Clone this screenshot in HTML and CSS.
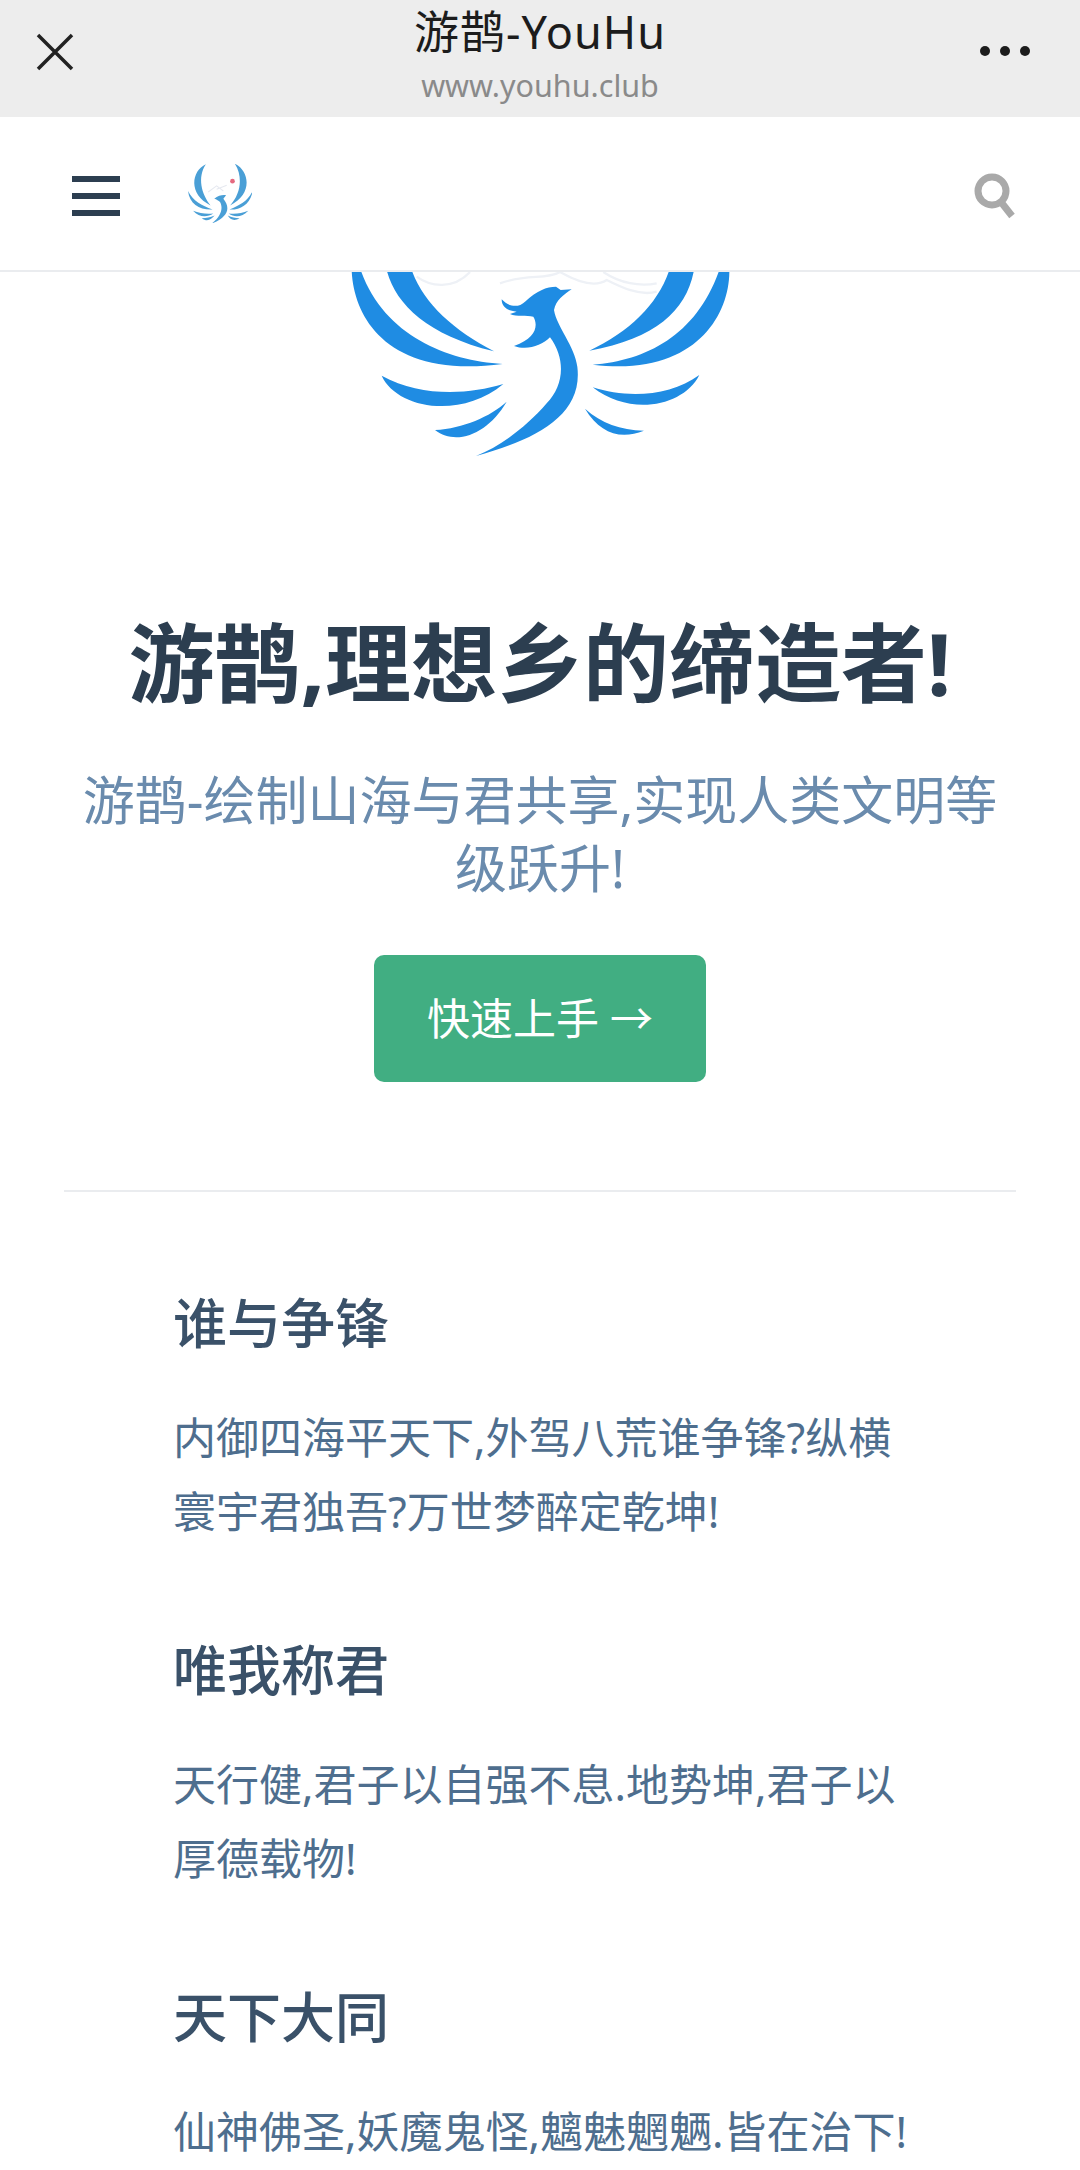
FILE: index.html
```html
<!DOCTYPE html>
<html lang="zh">
<head>
<meta charset="utf-8">
<title>游鹊-YouHu</title>
<link rel="stylesheet" href="styles.css">
</head>
<body>
<div class="page">
  <div class="wx-bar">
    <svg class="wx-close" viewBox="0 0 38 38"><path d="M2 2 L36 36 M36 2 L2 36"/></svg>
    <div class="wx-titles">
      <div class="wx-title">游鹊-YouHu</div>
      <div class="wx-url">www.youhu.club</div>
    </div>
    <div class="wx-more"><i></i><i></i><i></i></div>
  </div>
  <header class="nav">
    <div class="burger"><i></i><i></i><i></i></div>
    <svg class="nav-logo" viewBox="85 75 190 175">
      <g fill="#4a9fd6">
        <path d="M138 76 C95 95 85 165 152 198 C125 165 112 115 138 76Z"/>
        <path d="M224 74 C268 95 278 165 210 198 C240 165 250 115 224 74Z"/>
        <path d="M85 155 C90 195 120 212 158 210 C125 197 100 185 85 155Z"/>
        <path d="M277 155 C270 195 240 212 208 210 C240 197 262 185 277 155Z"/>
        <path d="M100 214 C118 234 142 234 160 222 C140 224 120 222 100 214Z"/>
        <path d="M264 214 C245 234 222 234 206 222 C225 224 245 222 264 214Z"/>
        <path d="M126 236 C142 248 154 240 164 228 C150 234 140 236 126 236Z"/>
        <path d="M238 236 C222 246 210 240 203 228 C215 234 225 236 238 236Z"/>
        <path d="M163 178 C175 168 190 166 198 168 L190 178 C212 205 205 232 155 252 C184 230 190 205 180 188 C176 184 170 180 163 178Z"/>
      </g>
      <circle cx="217" cy="126" r="7" fill="#e56a80"/>
      <path d="M145 158 L170 140 L190 155 M170 150 L200 138" fill="none" stroke="#e6e9f0" stroke-width="3"/>
    </svg>
    <svg class="nav-search" viewBox="0 0 42 46"><circle cx="18" cy="18" r="14" /><path d="M27 29 L38 43"/></svg>
  </header>
  <main class="home">
    <section class="hero">
      <svg class="hero-logo" viewBox="0 36 1320 594">
        <g class="mist">
          <path d="M290 50 C330 80 400 90 450 36"/>
          <path d="M540 70 C620 40 680 60 720 36 C780 70 830 80 860 60 C900 80 960 110 1010 95"/>
          <path d="M850 36 C900 70 960 80 1010 70"/>
        </g>
        <g class="wings">
          <path d="M95 30 C100 170 200 358 548 312 C380 302 190 225 122 30Z"/>
          <path d="M200 30 C225 130 320 225 522 274 C400 210 310 130 275 30Z"/>
          <path d="M1228 30 C1230 170 1120 352 818 314 C980 302 1130 225 1198 30Z"/>
          <path d="M1122 30 C1100 150 1010 235 808 272 C930 215 1015 130 1048 30Z"/>
          <path d="M185 347 C230 445 420 480 550 372 C440 405 300 410 185 347Z"/>
          <path d="M1138 345 C1090 440 930 470 818 382 C920 415 1050 410 1138 345Z"/>
          <path d="M345 510 C410 560 505 520 560 425 C510 470 430 505 345 510Z"/>
          <path d="M972 512 C900 540 840 520 795 446 C845 490 900 510 972 512Z"/>
          <path d="M468 588 C640 540 790 470 772 320 C765 260 710 200 702 150 C708 120 730 105 755 88 L722 90 L708 80 C680 80 650 92 615 125 C595 145 565 140 545 118 C545 140 560 152 590 155 L570 162 C590 172 620 165 640 170 C655 195 650 235 582 258 C620 272 665 258 690 232 C740 300 730 380 680 430 C620 500 540 560 468 588Z"/>
        </g>
      </svg>
      <h1 class="hero-title">游鹊,理想乡的缔造者!</h1>
      <p class="hero-desc">游鹊-绘制山海与君共享,实现人类文明等级跃升!</p>
      <a class="cta" href="#">快速上手 →</a>
    </section>
    <section class="features">
      <article class="feature">
        <h2>谁与争锋</h2>
        <p>内御四海平天下,外驾八荒谁争锋?纵横寰宇君独吾?万世梦醉定乾坤!</p>
      </article>
      <article class="feature">
        <h2>唯我称君</h2>
        <p>天行健,君子以自强不息.地势坤,君子以厚德载物!</p>
      </article>
      <article class="feature">
        <h2>天下大同</h2>
        <p>仙神佛圣,妖魔鬼怪,魑魅魍魉.皆在治下!</p>
      </article>
    </section>
  </main>
</div>
</body>
</html>
```
FILE: styles.css
```css
* { box-sizing: border-box; }
html, body { margin: 0; padding: 0; background: #fff; }
body {
  font-family: "Noto Sans", "Noto Sans CJK SC", sans-serif;
  color: #2c3e50;
}
.page { width: 1080px; height: 2170px; overflow: hidden; }

.wx-bar {
  height: 117px;
  background: #ededed;
  display: grid;
  grid-template-columns: 1fr auto 1fr;
  align-items: start;
  padding: 0 36px;
}
.wx-close { width: 38px; height: 38px; margin-top: 33px; }
.wx-close path { fill: none; stroke: #222; stroke-width: 3.5; }
.wx-titles { text-align: center; padding-top: 2px; }
.wx-title { font-size: 45px; line-height: 60px; color: #1c1c1c; letter-spacing: 1px; }
.wx-url { font-size: 30.5px; line-height: 40px; margin-top: 3px; color: #8a8a8a; }
.wx-more { display: flex; gap: 10px; margin: 46px 14px 0 0; width: 50px; justify-self: end; }
.wx-more i { width: 10px; height: 10px; border-radius: 50%; background: #1c1c1c; }

.nav {
  height: 155px;
  border-bottom: 2px solid #eaecef;
  display: flex;
  align-items: center;
  padding: 0 64px 0 72px;
  background: #fff;
}
.burger { width: 48px; display: flex; flex-direction: column; gap: 11px; margin-top: 4px; }
.burger i { display: block; height: 6px; background: #2c3e50; }
.nav-logo { width: 64px; height: 59px; margin-left: 68px; flex: none; }
.nav-search { width: 42px; height: 46px; margin-left: auto; flex: none; margin-top: 4px; }
.nav-search circle, .nav-search path { fill: none; stroke: #a9a9a9; stroke-width: 7; }

.home { padding: 0 64px; }
.hero { text-align: center; border-bottom: 2px solid #eaecef; padding-bottom: 108px; }
.hero-logo { display: block; width: 440px; height: 198px; margin: 0 auto; }
.mist path { fill: none; stroke: #eef1f6; stroke-width: 7; }
.wings path { fill: #1f8ce3; }
.hero-title {
  margin: 138px 0 0;
  font-size: 86px;
  line-height: 110px;
  font-weight: 700;
  color: #2c3e50;
}
.hero-desc {
  margin: 48px 0 0;
  font-size: 52px;
  line-height: 68px;
  color: #6a8bad;
}
.cta {
  display: inline-block;
  margin-top: 53px;
  width: 332px;
  height: 127px;
  line-height: 127px;
  border-radius: 10px;
  background: #41ae82;
  color: #fff;
  font-size: 43px;
  text-decoration: none;
}
.features { padding: 86px 96px 0 109px; }
.feature { margin-bottom: 76px; }
.feature h2 {
  margin: 0;
  font-size: 54px;
  line-height: 90px;
  font-weight: 500;
  color: #3a5169;
}
.feature p {
  margin: 33px 0 0;
  font-size: 43px;
  line-height: 74px;
  color: #4e6e8e;
}
```
